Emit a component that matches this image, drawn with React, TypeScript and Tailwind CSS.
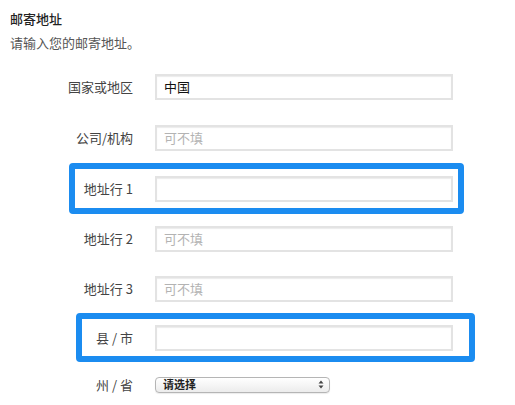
import React from 'react';

type RowProps = {
  label: string;
  value?: string;
  placeholder?: string;
  height: string;
  labelWidth?: string;
  highlight?: string;
};

const Field: React.FC<{ value?: string; placeholder?: string }> = ({ value, placeholder }) => (
  <div className="w-[298px] h-[26px] flex items-center px-[7px] bg-white border-2 border-[#e3e3e3] shadow-[inset_0_1px_1px_rgba(0,0,0,0.08)]">
    {value ? (
      <span className="text-[13px] text-[#111]">{value}</span>
    ) : (
      <span className="text-[13px] text-[#b3b3b3]">{placeholder}</span>
    )}
  </div>
);

const Row: React.FC<RowProps> = ({ label, value, placeholder, height, labelWidth = 'w-[133px]', highlight }) => {
  const inner = (
    <div className="flex items-center h-full">
      <div className={`${labelWidth} shrink-0 text-right text-[13px] text-[#444]`}>{label}</div>
      <div className="ml-[22px]">
        <Field value={value} placeholder={placeholder} />
      </div>
    </div>
  );
  if (highlight) {
    return <div className={`${height} ${highlight} border-[6px] border-[#1b8cf0] rounded-[4px] bg-white`}>{inner}</div>;
  }
  return <div className={height}>{inner}</div>;
};

const App: React.FC = () => {
  return (
    <div
      className="w-[515px] h-[405px] bg-white overflow-hidden pt-[10px]"
      style={{ fontFamily: '"Noto Sans CJK SC", "Liberation Sans", sans-serif' }}
    >
      <div className="pl-[10px]">
        <div className="text-[13px] leading-[18px] font-medium text-[#222]">邮寄地址</div>
        <div className="mt-[6px] text-[13px] leading-[18px] text-[#555]">请输入您的邮寄地址。</div>
      </div>

      <div className="mt-[10px] flex flex-col">
        <Row label="国家或地区" value="中国" height="h-[50px]" />
        <Row label="公司/机构" placeholder="可不填" height="h-[51px]" />
        <Row label="地址行 1" height="h-[51px]" highlight="ml-[69px] w-[395px]" labelWidth="w-[58px]" />
        <Row label="地址行 2" placeholder="可不填" height="h-[50px]" />
        <Row label="地址行 3" placeholder="可不填" height="h-[49px]" />
        <Row label="县 / 市" height="h-[49px]" highlight="ml-[76px] w-[399px]" labelWidth="w-[51px]" />
        <div className="h-[45px] flex items-center">
          <div className="w-[133px] shrink-0 text-right text-[13px] text-[#444]">州 / 省</div>
          <div className="ml-[22px] w-[175px] h-[16px] rounded-[4px] border border-[#b5b5b5] bg-gradient-to-b from-white to-[#ececec] flex items-center justify-between pl-[7px] pr-[5px] shadow-[0_1px_1px_rgba(0,0,0,0.08)]">
            <span className="text-[11px] leading-none font-bold text-[#222]">请选择</span>
            <svg width="6" height="9" viewBox="0 0 6 9">
              <path d="M3 0.5 L5.5 3.5 L0.5 3.5 Z" fill="#444" />
              <path d="M3 8.5 L5.5 5.5 L0.5 5.5 Z" fill="#444" />
            </svg>
          </div>
        </div>
      </div>
    </div>
  );
};

export default App;
